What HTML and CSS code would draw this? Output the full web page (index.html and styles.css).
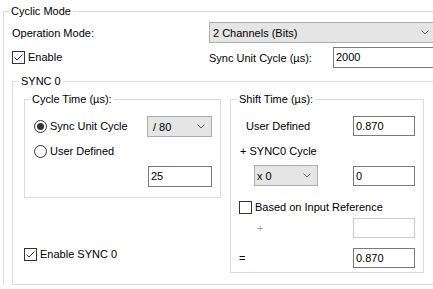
FILE: index.html
```html
<!DOCTYPE html>
<html>
<head>
  <title>Cyclic Mode</title>
  <link rel="stylesheet" href="styles.css">
</head>
<body>
  <fieldset class="group group-cyclic">
    <legend>Cyclic Mode</legend>
    <div class="cyclic-body">
      <div class="row row-mode">
        <span class="cell-label">Operation Mode:</span>
        <div class="combo combo-mode">
          <span>2 Channels (Bits)</span>
          <svg class="chevron" width="8" height="5" viewBox="0 0 8 5"><path d="M0.5 0.5 L4 4 L7.5 0.5" /></svg>
        </div>
      </div>
      <div class="row row-enable">
        <label class="check cell-label">
          <span class="box"><svg width="11" height="11" viewBox="0 0 11 11"><path d="M1.5 5.5 L4 8 L9.5 2.5" /></svg></span>
          Enable
        </label>
        <span class="sync-label">Sync Unit Cycle (µs):</span>
        <div class="field field-unit">2000</div>
      </div>

      <fieldset class="group group-sync">
        <legend>SYNC 0</legend>
        <div class="sync-body">
          <div class="sync-left">
            <fieldset class="group group-cycle">
              <legend>Cycle Time (µs):</legend>
              <div class="cycle-body">
                <label class="radio"><span class="dot checked"></span>Sync Unit Cycle</label>
                <div class="combo combo-small">
                  <span>/ 80</span>
                  <svg class="chevron" width="8" height="5" viewBox="0 0 8 5"><path d="M0.5 0.5 L4 4 L7.5 0.5" /></svg>
                </div>
                <label class="radio"><span class="dot"></span>User Defined</label>
                <span></span>
                <span></span>
                <div class="field field-small">25</div>
              </div>
            </fieldset>
            <label class="check enable-sync">
              <span class="box"><svg width="11" height="11" viewBox="0 0 11 11"><path d="M1.5 5.5 L4 8 L9.5 2.5" /></svg></span>
              Enable SYNC 0
            </label>
          </div>

          <fieldset class="group group-shift">
            <legend>Shift Time (µs):</legend>
            <div class="shift-body">
              <div class="shift-row r1">
                <span class="indent-user">User Defined</span>
                <div class="field field-small">0.870</div>
              </div>
              <div class="shift-row r2">
                <span class="indent-plus">+ SYNC0 Cycle</span>
              </div>
              <div class="shift-row r3">
                <div class="combo combo-small combo-mult">
                  <span>x 0</span>
                  <svg class="chevron" width="8" height="5" viewBox="0 0 8 5"><path d="M0.5 0.5 L4 4 L7.5 0.5" /></svg>
                </div>
                <div class="field field-small">0</div>
              </div>
              <div class="shift-row r4">
                <label class="check">
                  <span class="box"></span>
                  Based on Input Reference
                </label>
              </div>
              <div class="shift-row r5">
                <span class="disabled-text">+</span>
                <div class="field field-small field-disabled"></div>
              </div>
              <div class="shift-row r6">
                <span>=</span>
                <div class="field field-small">0.870</div>
              </div>
            </div>
          </fieldset>
        </div>
      </fieldset>
    </div>
  </fieldset>
</body>
</html>
```

FILE: styles.css
```css
html, body {
  margin: 0;
  overflow: hidden;
  background-color: #fff;
}

body {
  font-family: "Liberation Sans", Arial, sans-serif;
  font-size: 11px;
  color: #000;
  width: 433px;
  height: 289px;
}

/* group boxes */
.group {
  border: 1px solid #dcdcdc;
  margin: 0;
  padding: 0;
  min-width: 0;
  box-sizing: border-box;
}

.group > legend {
  padding: 0 2px;
  line-height: 14px;
}

/* outer box runs off the right and bottom of the window */
.group-cyclic {
  margin: 4px 0 0 3px;
  width: 430px;
  border-right: none;
  border-bottom: none;
}

.group-cyclic > legend {
  margin-left: 5px;
}

.cyclic-body {
  padding: 4px 0 0 8px;
}

.row {
  display: flex;
  align-items: center;
}

.cell-label {
  width: 197px;
  flex: none;
}

.row-enable {
  margin-top: 4px;
}

.sync-label {
  width: 124px;
  flex: none;
}

/* combos */
.combo {
  display: flex;
  align-items: center;
  justify-content: space-between;
  box-sizing: border-box;
  height: 21px;
  background-color: #e5e5e5;
  border: 1px solid #adadad;
  padding: 0 6px 0 3px;
}

.combo-mode {
  width: 224px;
  border-right: none;
  padding-right: 4px;
}

.combo-small {
  width: 65px;
  padding-left: 5px;
}

.combo-mult {
  width: 64px;
  margin-left: 15px;
  padding-left: 2px;
}

.chevron path {
  fill: none;
  stroke: #606060;
  stroke-width: 1;
}

/* text fields */
.field {
  box-sizing: border-box;
  height: 21px;
  line-height: 19px;
  border: 1px solid #7a7a7a;
  background-color: #fff;
  padding: 0 2px;
}

.field-unit {
  width: 100px;
  border-right: none;
}

.field-small {
  width: 62px;
}

.field-disabled {
  border-color: #cccccc;
}

/* checkboxes and radios */
.check, .radio {
  display: flex;
  align-items: center;
  line-height: 13px;
}

.box {
  box-sizing: border-box;
  width: 13px;
  height: 13px;
  border: 1px solid #333;
  margin-right: 3px;
  flex: none;
}

.box svg {
  display: block;
}

.box path {
  fill: none;
  stroke: #333;
  stroke-width: 1;
}

.dot {
  box-sizing: border-box;
  width: 13px;
  height: 13px;
  border: 1px solid #333;
  border-radius: 50%;
  margin-right: 3px;
  flex: none;
  display: flex;
  align-items: center;
  justify-content: center;
}

.dot.checked::after {
  content: "";
  width: 7px;
  height: 7px;
  border-radius: 50%;
  background-color: #333;
}

/* SYNC 0 */
.group-sync {
  margin-top: 6px;
  width: 421px;
  height: 211px;
  border-right: none;
}

.group-sync > legend {
  margin-left: 6px;
}

.sync-body {
  display: flex;
  gap: 9px;
  padding: 4px 0 0 11px;
}

.sync-left {
  display: flex;
  flex-direction: column;
  width: 197px;
  height: 181px;
}

.group-cycle {
  width: 197px;
  height: 106px;
}

.group-cycle > legend {
  margin-left: 5px;
}

.cycle-body {
  display: grid;
  grid-template-columns: 113px 65px;
  grid-template-rows: 21px 21px 20px;
  row-gap: 4px;
  align-items: center;
  padding: 10px 8px 0 9px;
}

.cycle-body .field-small {
  width: 64px;
  margin-left: 1px;
}

.enable-sync {
  margin-top: auto;
  margin-bottom: 12px;
}

/* Shift Time */
.group-shift {
  width: 194px;
  height: 181px;
}

.group-shift > legend {
  margin-left: 6px;
}

.shift-body {
  padding: 0 8px 0 8px;
}

.shift-row {
  display: flex;
  align-items: center;
  justify-content: space-between;
}

.shift-row .field {
  height: 20px;
  line-height: 18px;
}

.r1 { margin-top: 10px; }
.r2 { margin-top: 5px; height: 20px; }
.r3 { margin-top: 4px; }
.r4 { margin-top: 15px; }
.r5 { margin-top: 4px; }
.r6 { margin-top: 10px; }

.indent-user {
  margin-left: 7px;
}

.indent-plus {
  margin-left: 1px;
}

.disabled-text {
  margin-left: 18px;
  color: #a0a0a0;
}
```
